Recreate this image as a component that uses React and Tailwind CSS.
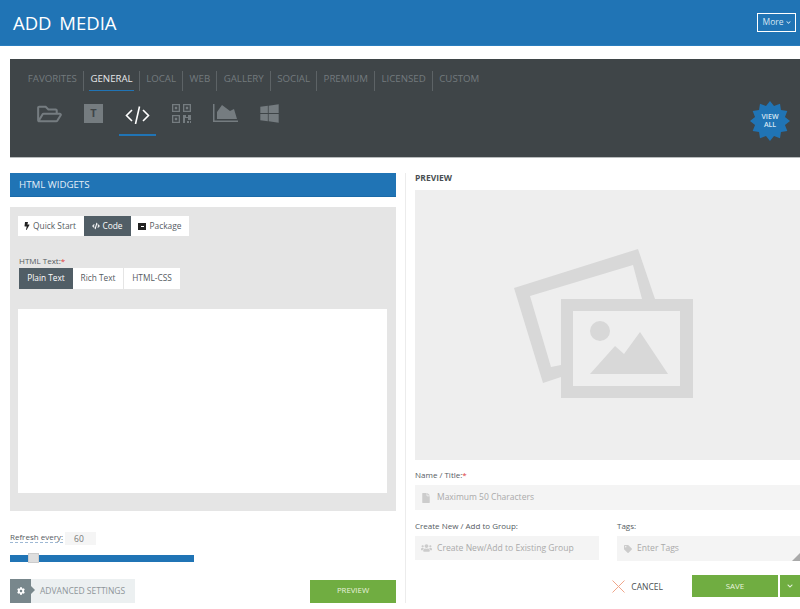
import React from "react";
import {
  FaRegFolderOpen,
  FaWindows,
  FaBolt,
  FaCode,
  FaCog,
  FaFile,
  FaUsers,
  FaTag,
  FaChevronDown,
} from "react-icons/fa";

const tabs = ["FAVORITES", "GENERAL", "LOCAL", "WEB", "GALLERY", "SOCIAL", "PREMIUM", "LICENSED", "CUSTOM"];

function starPoints() {
  const pts = [];
  for (let i = 0; i < 24; i++) {
    const r = i % 2 === 0 ? 20 : 15.5;
    const a = (Math.PI * i) / 12 - Math.PI / 2;
    pts.push(`${(20 + r * Math.cos(a)).toFixed(2)},${(20 + r * Math.sin(a)).toFixed(2)}`);
  }
  return pts.join(" ");
}

function Label({ children, required }) {
  return (
    <div className="text-[8px] leading-[13px] text-[#555b5f]">
      {children}
      {required && <span className="text-[#e03a3a]">*</span>}
    </div>
  );
}

export default function App() {
  return (
    <div className="w-[800px] h-[609px] overflow-hidden bg-white font-['Open_Sans',sans-serif]">
      {/* header */}
      <div className="h-[46px] bg-[#2074b5] border-b border-[#2a7ebf] flex items-center justify-between pl-[13px] pr-[4px]">
        <h1 className="text-[18.5px] text-white [word-spacing:3px]">ADD MEDIA</h1>
        <button className="w-[39px] h-[19px] border border-white flex items-center justify-center gap-[2px] text-[8.5px] text-[#d5e6f3] mt-[-1px]">
          More <FaChevronDown className="text-[5px]" />
        </button>
      </div>

      {/* media type panel */}
      <div className="relative ml-[10px] mt-[13px] h-[99px] bg-[#3f4548] border-b border-[#b9bcbd]">
        <div className="flex pl-[11.5px] pt-[12px]">
          {tabs.map((t, i) => (
            <div
              key={t}
              className={`h-[20px] px-[6.25px] text-[9.7px] leading-[15px] text-[#737a7e] border-[#5d6366] ${i < tabs.length - 1 ? "border-r" : ""}`}
            >
              <span className={t === "GENERAL" ? "block text-[#e6e8e9] h-[20px] -mx-[1px] px-[1px] border-b border-[#2074b5]" : ""}>{t}</span>
            </div>
          ))}
        </div>
        <div className="flex items-start pl-[27px] pt-[12px] text-[#757c80]">
          <FaRegFolderOpen className="w-[25px] h-[22px]" />
          <div className="ml-[22px] mt-[1px] w-[19px] h-[19px] bg-[#757c80] flex items-center justify-center text-[11px] font-bold text-[#3f4548]">T</div>
          <div className="ml-[16px] w-[37px] h-[33px] border-b-2 border-[#2074b5] flex justify-center">
            <svg width="25" height="18" viewBox="0 0 25 18" className="mt-[3px]" fill="none" stroke="#fff" strokeWidth="1.6">
              <path d="M7 4 1.5 9.5 7 15M18 4l5.5 5.5L18 15M14.5 0.5 10.5 18" />
            </svg>
          </div>
          <svg width="19" height="19" viewBox="0 0 19 19" className="ml-[16px] mt-[1px]" fill="currentColor" fillRule="evenodd">
            <path d="M0 0h8v8H0zM1.3 1.3v5.4h5.4V1.3zM2.8 2.8h2.4v2.4H2.8z" />
            <path d="M11 0h8v8h-8zM12.3 1.3v5.4h5.4V1.3zM13.8 2.8h2.4v2.4h-2.4z" />
            <path d="M0 11h8v8H0zM1.3 12.3v5.4h5.4v-5.4zM2.8 13.8h2.4v2.4H2.8z" />
            <path d="M11 11h3v2h2v-2h3v5h-3v-2h-3v5h-2zM15 17h2v2h-2zM18 17h1v2h-1z" />
          </svg>
          <svg width="25" height="18" viewBox="0 0 25 18" className="ml-[22px] mt-[1px]" fill="currentColor">
            <path d="M0 0h1.5v16.5H25V18H0z" />
            <path d="M4 15V8l5-7 8 6 4-2 3 10z" />
          </svg>
          <FaWindows className="ml-[21px] w-[21px] h-[21px]" />
        </div>
        <div className="absolute right-[10px] top-[42px] w-[40px] h-[40px]">
          <svg width="40" height="40" viewBox="0 0 40 40">
            <polygon points={starPoints()} fill="#2074b5" />
          </svg>
          <div className="absolute inset-0 flex items-center justify-center text-center text-[7px] leading-[8px] font-semibold text-[#d7e7f4]">
            VIEW
            <br />
            ALL
          </div>
        </div>
      </div>

      <div className="flex mt-[15px]">
        {/* left column */}
        <div className="w-[386px] ml-[10px] shrink-0">
          <div className="h-[24px] bg-[#2074b5] border-b border-[#1a6aa8] pl-[9px] text-[9.7px] font-medium leading-[24px] text-[#e3eef7]">HTML WIDGETS</div>
          <div className="mt-[10px] h-[304px] bg-[#e5e5e5] pl-[8px] pt-[9px]">
            <div className="flex w-fit h-[20px] bg-white text-[8.4px] text-[#555b5f]">
              <div className="w-[66px] pl-[5px] flex items-center gap-[2px]"><FaBolt className="text-[8px] text-[#222]" />Quick Start</div>
              <div className="w-[47px] flex items-center justify-center gap-[2px] bg-[#515e66] text-white"><FaCode className="text-[8px]" />Code</div>
              <div className="w-[58px] flex items-center justify-center gap-[3px]">
                <span className="w-[8px] h-[7px] bg-[#222] flex items-center justify-center"><span className="w-[3px] h-[1px] bg-white"></span></span>
                Package
              </div>
            </div>
            <div className="mt-[18px] pl-[1px]">
              <Label required>HTML Text:</Label>
            </div>
            <div className="flex w-fit ml-[1px] mt-[1px] h-[21px] bg-white text-[8.3px] text-[#555b5f]">
              <div className="w-[54px] flex items-center justify-center bg-[#515e66] text-white">Plain Text</div>
              <div className="w-[51px] flex items-center justify-center border-r border-[#e5e5e5]">Rich Text</div>
              <div className="w-[56px] flex items-center justify-center">HTML-CSS</div>
            </div>
            <div className="mt-[20px] w-[369px] h-[184px] bg-white"></div>
          </div>

          <div className="mt-[21px] flex items-start h-[13px]">
            <span className="text-[8px] leading-[10px] text-[#555b5f] border-b border-dashed border-[#9db8d4]">Refresh every:</span>
            <span className="ml-[2px] w-[31px] h-[13px] bg-[#f5f5f5] pl-[9px] text-[8.5px] leading-[14px] text-[#777]">60</span>
          </div>
          <div className="relative mt-[10px] w-[184px] h-[7px] bg-[#2074b5]">
            <div className="absolute left-[18px] -top-[2px] w-[11px] h-[10px] bg-[#dedede] border border-[#ccc]"></div>
          </div>
          <div className="mt-[17px] flex items-center justify-between">
            <div className="flex w-[125px] h-[24px] bg-[#ecf0f1] items-center">
              <div className="relative w-[21px] h-[24px] bg-[#78878c] flex items-center justify-center">
                <FaCog className="text-[8px] text-white" />
                <span className="absolute -right-[4px] top-[7px] border-y-[4px] border-l-[4px] border-y-transparent border-l-[#78878c]"></span>
              </div>
              <span className="ml-[9px] text-[8.5px] whitespace-nowrap text-[#8e9599]">ADVANCED SETTINGS</span>
            </div>
            <div className="w-[86px] h-[23px] bg-[#70ad41] flex items-center justify-center text-[7.8px] text-[#e8f2df]">PREVIEW</div>
          </div>
        </div>

        {/* right column */}
        <div className="ml-[9px] h-[430px] w-[405px] shrink-0 border-l border-[#ececec] pl-[9px]">
          <div className="-mt-[1px] text-[8.5px] font-bold leading-[11px] text-[#4a4f53]">PREVIEW</div>
          <div className="mt-[7px] h-[270px] bg-[#eeeeee] pl-[99px] pt-[59px]">
            <svg width="179" height="149" viewBox="0 0 179 149" fill="none">
              <path fill="#d8d8d8" d="M0 39 124 0l17 50h-13L119 16 16 47l21 71 10-2v12l-18 6z" />
              <path fill="#d8d8d8" fillRule="evenodd" d="M47 50h132v99H47zM59 62v75h107V62z" />
              <circle cx="86" cy="82" r="10" fill="#d8d8d8" />
              <path fill="#d8d8d8" d="M76 125l25-28 9 8 16-22 28 42z" />
            </svg>
          </div>
          <div className="mt-[8px]">
            <Label required>Name / Title:</Label>
          </div>
          <div className="mt-[4px] h-[25px] bg-[#f4f4f4] flex items-center pl-[7px] text-[8.5px] text-[#aaaaaa]">
            <FaFile className="w-[8px] h-[10px] text-[#cccccc]" />
            <span className="ml-[7px]">Maximum 50 Characters</span>
          </div>
          <div className="flex mt-[9px]">
            <div className="w-[184px]">
              <Label>Create New / Add to Group:</Label>
              <div className="mt-[4px] h-[24px] bg-[#f4f4f4] flex items-center pl-[6px] text-[8.6px] text-[#aaaaaa]">
                <FaUsers className="w-[11px] h-[10px] text-[#cccccc]" />
                <span className="ml-[5px]">Create New/Add to Existing Group</span>
              </div>
            </div>
            <div className="ml-[18px] flex-1">
              <Label>Tags:</Label>
              <div className="relative mt-[4px] h-[25px] w-[183px] bg-[#f4f4f4] flex items-center pl-[7px] text-[8.6px] text-[#aaaaaa]">
                <FaTag className="w-[8px] h-[8px] text-[#cccccc]" />
                <span className="ml-[5px]">Enter Tags</span>
                <svg width="8" height="8" viewBox="0 0 8 8" className="absolute right-0 bottom-0">
                  <path d="M8 0v8H0z" fill="#a9a9a9" />
                </svg>
              </div>
            </div>
          </div>
          <div className="flex items-center justify-end mt-[14px] h-[22px] w-[385px]">
            <svg width="13" height="13" viewBox="0 0 13 13" fill="none" stroke="#f0a68a" strokeWidth="1">
              <path d="M.5.5l12 12M12.5.5l-12 12" />
            </svg>
            <span className="ml-[6px] mt-[2px] text-[8.5px] text-[#4a4f53]">CANCEL</span>
            <div className="ml-[29px] w-[86px] h-[22px] bg-[#70ad41] flex items-center justify-center text-[8px] text-[#e8f2df]">SAVE</div>
            <div className="ml-[2px] w-[20px] h-[22px] bg-[#70ad41] flex items-center justify-center text-[#e8f2df]">
              <FaChevronDown className="text-[6px]" />
            </div>
          </div>
        </div>
      </div>
    </div>
  );
}
